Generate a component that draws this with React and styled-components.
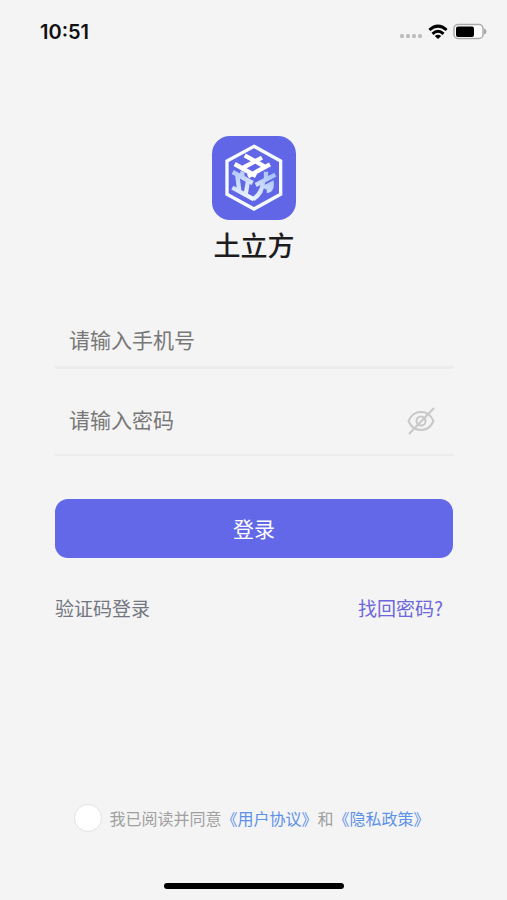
import React, { useState } from "react";
import styled, { createGlobalStyle } from "styled-components";

const Global = createGlobalStyle`
  * { box-sizing: border-box; }
  html, body { margin: 0; background: #f4f4f4; }
  body, button, input {
    font-family: "Noto Sans CJK SC", sans-serif;
  }
`;

const Page = styled.div`
  min-height: 100vh;
  display: flex;
  flex-direction: column;
  background: #f4f4f4;
`;

const StatusBar = styled.header`
  display: flex;
  align-items: center;
  justify-content: space-between;
  height: 64px;
  padding: 0 20px 0 40px;
`;

const Clock = styled.time`
  font: 600 20px/24px Inter, sans-serif;
  color: #111;
`;

const StatusIcons = styled.div`
  display: flex;
  align-items: center;
  gap: 5px;
`;

const Main = styled.main`
  flex: 1;
  display: flex;
  flex-direction: column;
  padding: 72px 54px 0 55px;
`;

const Brand = styled.div`
  display: flex;
  flex-direction: column;
  align-items: center;
  gap: 7px;
`;

const BrandName = styled.h1`
  margin: 0;
  font-size: 27px;
  line-height: 36px;
  font-weight: 500;
  color: #1c1c1e;
`;

const Form = styled.form`
  display: flex;
  flex-direction: column;
  margin-top: 60px;
`;

const Field = styled.label`
  display: flex;
  align-items: flex-end;
  padding: 0 18px ${(p) => p.$space}px 14px;
  border-bottom: ${(p) => p.$line}px solid #ececec;

  & + & { margin-top: 34px; }
`;

const TextInput = styled.input`
  flex: 1;
  min-width: 0;
  height: 32px;
  padding: 0;
  border: 0;
  outline: 0;
  background: transparent;
  font-size: 21px;
  line-height: 32px;
  color: #333;
  &::placeholder { color: #777; opacity: 1; }
`;

const IconButton = styled.button`
  display: flex;
  padding: 0;
  border: 0;
  background: transparent;
  cursor: pointer;
`;

const SubmitButton = styled.button`
  height: 59px;
  margin-top: 43px;
  padding: 0 0 2px;
  border: 0;
  border-radius: 13px;
  background: #6268e8;
  color: #fff;
  font-size: 21px;
  line-height: 32px;
  font-weight: 400;
  cursor: pointer;
`;

const Links = styled.nav`
  display: flex;
  justify-content: space-between;
  margin-top: 36px;
  padding-right: 10px;
`;

const TextLink = styled.a`
  font-size: 19px;
  line-height: 28px;
  text-decoration: none;
  color: ${(p) => (p.$accent ? "#6d67dc" : "#737680")};
`;

const Footer = styled.footer`
  display: flex;
  flex-direction: column;
  align-items: center;
  gap: 51px;
  padding-bottom: 11px;
`;

const Agreement = styled.div`
  display: flex;
  align-items: center;
  gap: 7px;
  padding-right: 3px;
`;

const Radio = styled.input`
  appearance: none;
  flex: none;
  width: 28px;
  height: 28px;
  margin: 0;
  border: 1px solid #e2e2e2;
  border-radius: 50%;
  background: #fff;
  &:checked { background: #6268e8; }
`;

const AgreementText = styled.label`
  font-size: 16px;
  line-height: 24px;
  color: #a0a0a0;
`;

const PolicyLink = styled.a`
  color: #5d91e8;
  text-decoration: none;
`;

const HomeIndicator = styled.div`
  width: 180px;
  height: 6px;
  border-radius: 3px;
  background: #000;
`;

function Logo() {
  return (
    <svg width="84" height="84" viewBox="36 33 252 252" aria-hidden="true">
      <defs>
        <linearGradient id="face" gradientUnits="userSpaceOnUse" x1="110" y1="140" x2="140" y2="225">
          <stop offset="0" stopColor="#b4cafa" />
          <stop offset="1" stopColor="#f2f7ff" />
        </linearGradient>
        <linearGradient id="side" gradientUnits="userSpaceOnUse" x1="225" y1="145" x2="168" y2="220">
          <stop offset="0" stopColor="#a3bff8" />
          <stop offset="1" stopColor="#e6efff" />
        </linearGradient>
      </defs>
      <rect x="36" y="33" width="252" height="252" rx="54" fill="#6066e6" />
      <path d="M162 64 242 108V208L162 252 81 208V108Z" fill="none" stroke="#f7faff" strokeWidth="10" />
      <path d="M134 91 198 127M104 117 168 153M186 98 122 132M210 118 144 154" fill="none" stroke="#fff" strokeWidth="13" />
      <path d="M98 141 158 174M127 139V157M112 152 118 198M144 168 137 208M97 188 162 223" fill="none" stroke="url(#face)" strokeWidth="13" />
      <path d="M167 180 226 149M198 140V166M189 170Q188 203 160 223M192 188 215 176Q216 196 200 198" fill="none" stroke="url(#side)" strokeWidth="13" />
    </svg>
  );
}

function SignalDots() {
  return (
    <svg width="24" height="18" viewBox="0 0 24 18" fill="#bdbdbd" aria-hidden="true">
      <rect x="1" y="11" width="4" height="4" rx="1.500" />
      <rect x="7" y="11" width="4" height="4" rx="1.500" />
      <rect x="13" y="11" width="4" height="4" rx="1.500" />
      <rect x="19" y="11" width="4" height="4" rx="1.500" />
    </svg>
  );
}

function Wifi() {
  return (
    <svg width="20" height="16" viewBox="0 0 20 16" fill="none" stroke="#000" strokeWidth="3" aria-hidden="true">
      <path d="M1.400 6Q10-1.800 18.600 6M4.500 9.800Q10 4.800 15.500 9.800" />
      <path d="M10 15 6.800 11.900Q10 9.400 13.200 11.900Z" fill="#000" stroke="none" />
    </svg>
  );
}

function Battery() {
  return (
    <svg width="34" height="18" viewBox="0 0 34 18" aria-hidden="true">
      <rect x="1" y="1.500" width="29" height="14" rx="4" fill="#fff" stroke="#aaa" strokeWidth="1.500" />
      <rect x="3" y="3.500" width="18" height="10.500" rx="2" fill="#000" />
      <path d="M31 5.500q2.500 .6 2.500 3t-2.500 3z" fill="#aaa" />
    </svg>
  );
}

function EyeOff() {
  return (
    <svg width="28" height="28" viewBox="0 0 28 28" fill="none" stroke="#c8c8c8" strokeWidth="2" aria-hidden="true">
      <path d="M1.500 14C4 8 8.500 5 14 5s10 3 12.500 9C24 20 19.500 23 14 23S4 20 1.500 14Z" />
      <circle cx="14" cy="14" r="4.500" />
      <path d="M27 1 2 27" />
    </svg>
  );
}

export default function App() {
  const [visible, setVisible] = useState(false);
  return (
    <Page>
      <Global />
      <StatusBar>
        <Clock>10:51</Clock>
        <StatusIcons>
          <SignalDots />
          <Wifi />
          <Battery />
        </StatusIcons>
      </StatusBar>
      <Main>
        <Brand>
          <Logo />
          <BrandName>土立方</BrandName>
        </Brand>
        <Form onSubmit={(e) => e.preventDefault()}>
          <Field $space={11} $line={3}>
            <TextInput type="tel" placeholder="请输入手机号" aria-label="手机号" />
          </Field>
          <Field $space={19} $line={2}>
            <TextInput type={visible ? "text" : "password"} placeholder="请输入密码" aria-label="密码" />
            <IconButton type="button" aria-label="显示密码" onClick={() => setVisible(!visible)}>
              <EyeOff />
            </IconButton>
          </Field>
          <SubmitButton type="submit">登录</SubmitButton>
        </Form>
        <Links>
          <TextLink href="#code">验证码登录</TextLink>
          <TextLink href="#reset" $accent>找回密码?</TextLink>
        </Links>
      </Main>
      <Footer>
        <Agreement>
          <Radio type="radio" id="agree" />
          <AgreementText htmlFor="agree">
            我已阅读并同意<PolicyLink href="#terms">《用户协议》</PolicyLink>和<PolicyLink href="#privacy">《隐私政策》</PolicyLink>
          </AgreementText>
        </Agreement>
        <HomeIndicator />
      </Footer>
    </Page>
  );
}
